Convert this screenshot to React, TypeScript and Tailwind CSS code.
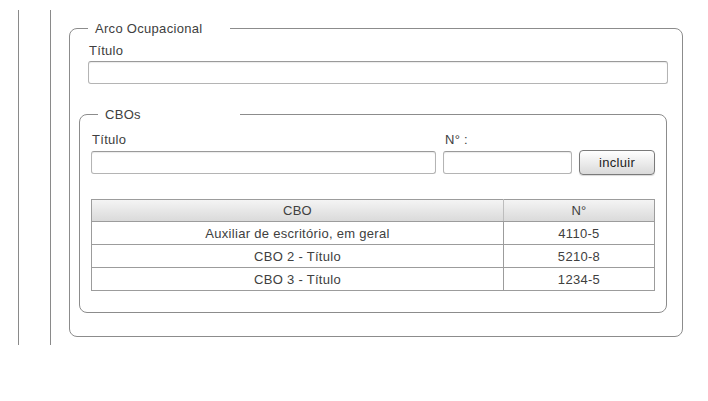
import React from "react";

type Cbo = {
  titulo: string;
  numero: string;
};

const cbos: Cbo[] = [
  { titulo: "Auxiliar de escritório, em geral", numero: "4110-5" },
  { titulo: "CBO 2 - Título", numero: "5210-8" },
  { titulo: "CBO 3 - Título", numero: "1234-5" },
];

const inputCls =
  "block h-[23px] rounded-[3px] border border-[#b4b4b4] border-t-[#9a9a9a] bg-white shadow-[inset_0_1px_1px_rgba(0,0,0,0.08)] outline-none";

const App: React.FC = () => {
  return (
    <div className="w-[708px] h-[401px] bg-white pt-[10px] font-['Liberation_Sans',Arial,sans-serif] text-[13px] leading-[15px] tracking-[0.3px] text-[#404040]">
      <div className="ml-[18px] h-[335px] border-l border-[#8a8a8a] pl-[31px]">
        <div className="h-full border-l border-[#8a8a8a] pl-[18px] pt-[11px]">
          {/* Arco Ocupacional */}
          <fieldset className="w-[614px] rounded-[8px] border border-[#8c8c8c] pl-[9px] pr-[14px] pt-[7px] pb-[23px]">
            <legend className="ml-[9px] w-[142px] px-[7px]">Arco Ocupacional</legend>
            <div className="pl-[9px]">
              <label className="block pl-[1px]">Título</label>
              <input className={`${inputCls} mt-[3px] w-[580px]`} />
            </div>

            {/* CBOs */}
            <fieldset className="mt-[23px] w-[588px] rounded-[8px] border border-[#8c8c8c] pl-[11px] pr-[11px] pt-[10px] pb-[21px]">
              <legend className="ml-[7px] w-[142px] px-[7px]">CBOs</legend>
              <div className="grid grid-cols-[345px_129px_76px] gap-x-[7px] gap-y-[3px] items-center">
                <label className="pl-[1px]">Título</label>
                <label className="pl-[2px]">N° :</label>
                <span />
                <input className={`${inputCls} w-full`} />
                <input className={`${inputCls} w-full`} />
                <button className="h-[25px] rounded-[4px] border border-[#7a7a7a] bg-gradient-to-b from-white to-[#dadada] text-[#222] shadow-[0_1px_1px_rgba(0,0,0,0.15)]">
                  incluir
                </button>
              </div>

              <table className="mt-[24px] w-[564px] border-collapse text-center">
                <thead>
                  <tr className="h-[22px] bg-gradient-to-b from-[#f4f4f4] to-[#d9d9d9]">
                    <th className="w-[412px] border border-[#9c9c9c] border-r-[#bdbdbd] font-normal">CBO</th>
                    <th className="border border-[#9c9c9c] font-normal">N°</th>
                  </tr>
                </thead>
                <tbody>
                  {cbos.map((c) => (
                    <tr key={c.numero} className="h-[23px]">
                      <td className="border border-[#9c9c9c]">{c.titulo}</td>
                      <td className="border border-[#9c9c9c]">{c.numero}</td>
                    </tr>
                  ))}
                </tbody>
              </table>
            </fieldset>
          </fieldset>
        </div>
      </div>
    </div>
  );
};

export default App;
